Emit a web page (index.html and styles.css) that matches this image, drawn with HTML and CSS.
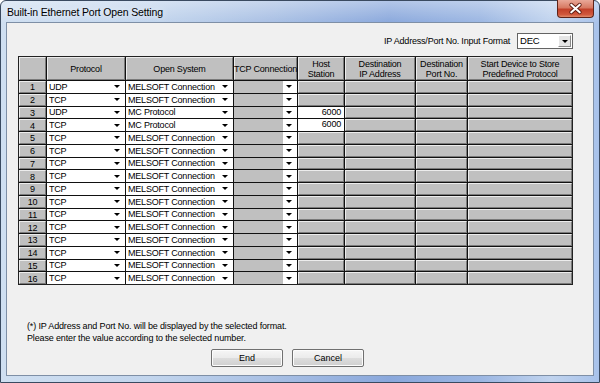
FILE: index.html
```html
<!DOCTYPE html>
<html lang="en">
<head>
    <meta charset="UTF-8">
    <meta name="viewport" content="width=device-width, initial-scale=1.0">
    <title>Built-in Ethernet Port Open Setting</title>
    <link rel="stylesheet" href="styles.css">
</head>
<body>
    <div class="window">
        <div class="titlebar">
            <span class="title">Built-in Ethernet Port Open Setting</span>
            <button class="close" aria-label="Close">
                <svg width="37" height="17" viewBox="0 0 37 17">
                    <path d="M14 4.5 L23 12.5 M23 4.5 L14 12.5" stroke="#5a1a10" stroke-width="4" stroke-linecap="round"/>
                    <path d="M14 4.5 L23 12.5 M23 4.5 L14 12.5" stroke="#fff" stroke-width="2.2" stroke-linecap="round"/>
                </svg>
            </button>
        </div>

        <div class="client">
            <div class="format-row">
                <span>IP Address/Port No. Input Format</span>
                <div class="combo">
                    <span class="combo-text">DEC</span>
                    <span class="combo-btn"></span>
                </div>
            </div>

            <div class="grid">
                <div class="head"></div>
                <div class="head">Protocol</div>
                <div class="head">Open System</div>
                <div class="head">TCP Connection</div>
                <div class="head">Host<br>Station</div>
                <div class="head">Destination<br>IP Address</div>
                <div class="head">Destination<br>Port No.</div>
                <div class="head">Start Device to Store<br>Predefined Protocol</div>

                <div class="num">1</div>
                <div class="sel"><span>UDP</span></div>
                <div class="sel"><span>MELSOFT Connection</span></div>
                <div class="sel off"><span></span></div>
                <div class="ro"></div><div class="ro"></div><div class="ro"></div><div class="ro"></div>

                <div class="num">2</div>
                <div class="sel"><span>TCP</span></div>
                <div class="sel"><span>MELSOFT Connection</span></div>
                <div class="sel off"><span></span></div>
                <div class="ro"></div><div class="ro"></div><div class="ro"></div><div class="ro"></div>

                <div class="num">3</div>
                <div class="sel"><span>UDP</span></div>
                <div class="sel"><span>MC Protocol</span></div>
                <div class="sel off"><span></span></div>
                <div class="val">6000</div><div class="ro"></div><div class="ro"></div><div class="ro"></div>

                <div class="num">4</div>
                <div class="sel"><span>TCP</span></div>
                <div class="sel"><span>MC Protocol</span></div>
                <div class="sel off"><span></span></div>
                <div class="val">6000</div><div class="ro"></div><div class="ro"></div><div class="ro"></div>

                <div class="num">5</div>
                <div class="sel"><span>TCP</span></div>
                <div class="sel"><span>MELSOFT Connection</span></div>
                <div class="sel off"><span></span></div>
                <div class="ro"></div><div class="ro"></div><div class="ro"></div><div class="ro"></div>

                <div class="num">6</div>
                <div class="sel"><span>TCP</span></div>
                <div class="sel"><span>MELSOFT Connection</span></div>
                <div class="sel off"><span></span></div>
                <div class="ro"></div><div class="ro"></div><div class="ro"></div><div class="ro"></div>

                <div class="num">7</div>
                <div class="sel"><span>TCP</span></div>
                <div class="sel"><span>MELSOFT Connection</span></div>
                <div class="sel off"><span></span></div>
                <div class="ro"></div><div class="ro"></div><div class="ro"></div><div class="ro"></div>

                <div class="num">8</div>
                <div class="sel"><span>TCP</span></div>
                <div class="sel"><span>MELSOFT Connection</span></div>
                <div class="sel off"><span></span></div>
                <div class="ro"></div><div class="ro"></div><div class="ro"></div><div class="ro"></div>

                <div class="num">9</div>
                <div class="sel"><span>TCP</span></div>
                <div class="sel"><span>MELSOFT Connection</span></div>
                <div class="sel off"><span></span></div>
                <div class="ro"></div><div class="ro"></div><div class="ro"></div><div class="ro"></div>

                <div class="num">10</div>
                <div class="sel"><span>TCP</span></div>
                <div class="sel"><span>MELSOFT Connection</span></div>
                <div class="sel off"><span></span></div>
                <div class="ro"></div><div class="ro"></div><div class="ro"></div><div class="ro"></div>

                <div class="num">11</div>
                <div class="sel"><span>TCP</span></div>
                <div class="sel"><span>MELSOFT Connection</span></div>
                <div class="sel off"><span></span></div>
                <div class="ro"></div><div class="ro"></div><div class="ro"></div><div class="ro"></div>

                <div class="num">12</div>
                <div class="sel"><span>TCP</span></div>
                <div class="sel"><span>MELSOFT Connection</span></div>
                <div class="sel off"><span></span></div>
                <div class="ro"></div><div class="ro"></div><div class="ro"></div><div class="ro"></div>

                <div class="num">13</div>
                <div class="sel"><span>TCP</span></div>
                <div class="sel"><span>MELSOFT Connection</span></div>
                <div class="sel off"><span></span></div>
                <div class="ro"></div><div class="ro"></div><div class="ro"></div><div class="ro"></div>

                <div class="num">14</div>
                <div class="sel"><span>TCP</span></div>
                <div class="sel"><span>MELSOFT Connection</span></div>
                <div class="sel off"><span></span></div>
                <div class="ro"></div><div class="ro"></div><div class="ro"></div><div class="ro"></div>

                <div class="num">15</div>
                <div class="sel"><span>TCP</span></div>
                <div class="sel"><span>MELSOFT Connection</span></div>
                <div class="sel off"><span></span></div>
                <div class="ro"></div><div class="ro"></div><div class="ro"></div><div class="ro"></div>

                <div class="num">16</div>
                <div class="sel"><span>TCP</span></div>
                <div class="sel"><span>MELSOFT Connection</span></div>
                <div class="sel off"><span></span></div>
                <div class="ro"></div><div class="ro"></div><div class="ro"></div><div class="ro"></div>
            </div>

            <p class="note">
                (*) IP Address and Port No. will be displayed by the selected format.<br>
                Please enter the value according to the selected number.
            </p>

            <div class="buttons">
                <button class="btn">End</button>
                <button class="btn">Cancel</button>
            </div>
        </div>
    </div>
</body>
</html>
```

FILE: styles.css
```css
* {
    box-sizing: border-box;
}

body {
    margin: 0;
    width: 600px;
    height: 383px;
    overflow: hidden;
    font-family: 'Liberation Sans', Arial, sans-serif;
    font-size: 9px;
    letter-spacing: -0.2px;
    color: #000;
}

/* window frame */
.window {
    width: 600px;
    height: 383px;
    display: flex;
    flex-direction: column;
    border: 1px solid #3a4a60;
    border-radius: 6px 6px 0 0;
    background:
        linear-gradient(to bottom, rgba(255,255,255,0.35), rgba(255,255,255,0) 22px),
        linear-gradient(to right, #cfdff1 0%, #c2d5ed 25%, #a9c0e4 45%, #8aa8dc 65%, #9bb6e2 80%, #c0d3ee 92%, #a8c2ea 100%);
}

.titlebar {
    height: 21px;
    display: flex;
    align-items: flex-start;
    padding-left: 6px;
}

.title {
    font-size: 10.5px;
    letter-spacing: -0.15px;
    line-height: 22px;
    color: #000;
    text-shadow: 0 0 6px rgba(255,255,255,0.9);
}

.close {
    margin-left: auto;
    margin-right: 5px;
    margin-top: -1px;
    width: 37px;
    height: 18px;
    padding: 0;
    border: 1px solid #5e2318;
    border-top: none;
    border-radius: 0 0 4px 4px;
    background: linear-gradient(to bottom, #e9a898 0%, #d77a63 45%, #c2412a 55%, #d0573c 85%, #e08a6a 100%);
    display: flex;
}

/* client area */
.client {
    flex: 1;
    margin: 0 5px 6px 5px;
    border: 1px solid #7e8fa6;
    background-color: #f0f0f0;
    padding: 0 20px 0 11px;
}

.format-row {
    margin-top: 10px;
    height: 16px;
    display: flex;
    justify-content: flex-end;
    align-items: center;
    gap: 7px;
}

.combo {
    width: 56px;
    height: 16px;
    display: flex;
    border: 1px solid #646464;
    background-color: #fff;
}

.combo-text {
    flex: 1;
    padding-left: 2px;
    line-height: 14px;
    font-size: 9.5px;
}

.combo-btn {
    width: 13px;
    margin: 1px;
    background-color: #e6e6e6;
    border: 1px solid;
    border-color: #fff #8a8a8a #8a8a8a #fff;
    display: flex;
    align-items: center;
    justify-content: center;
}

.combo-btn::after {
    content: '';
    border-left: 3px solid transparent;
    border-right: 3px solid transparent;
    border-top: 3px solid #000;
}

/* setting grid */
.grid {
    margin-top: 7px;
    display: grid;
    grid-template-columns: 27px 78px 107px 63px 46px 70px 51px 104px;
    grid-template-rows: 23px repeat(16, 11.75px);
    gap: 1px;
    background-color: #111;
    border: 1px solid #222;
    line-height: 10px;
}

.head,
.num,
.ro {
    background-color: #c0c0c0;
    border: 1px solid;
    border-color: #ececec #7a7a7a #7a7a7a #ececec;
}

.head {
    display: flex;
    align-items: center;
    justify-content: center;
    text-align: center;
    white-space: nowrap;
}

.num {
    display: flex;
    align-items: center;
    justify-content: center;
    padding-top: 1px;
}

.sel {
    background-color: #fff;
    display: flex;
    align-items: center;
    padding-left: 2px;
}

.sel span {
    flex: 1;
    white-space: nowrap;
    overflow: hidden;
}

.sel::after {
    content: '';
    margin: 0 5px 0 4px;
    border-left: 3px solid transparent;
    border-right: 3px solid transparent;
    border-top: 3px solid #000;
}

.sel.off {
    padding-left: 0;
    background: linear-gradient(to right, #c0c0c0 calc(100% - 14px), #fff 0);
}

.val {
    background-color: #fff;
    text-align: right;
    padding-right: 3px;
}

/* footer */
.note {
    margin: 35px 0 0 9px;
    line-height: 12px;
    letter-spacing: -0.15px;
}

.buttons {
    display: flex;
    gap: 9px;
    margin: 5px 0 0 193px;
}

.btn {
    width: 72px;
    height: 18px;
    padding: 0;
    font-family: inherit;
    font-size: 9px;
    color: #000;
    border: 1px solid #707070;
    border-radius: 2px;
    background: linear-gradient(to bottom, #f6f6f6 0%, #ebebeb 50%, #dddddd 51%, #cfcfcf 100%);
    box-shadow: inset 0 0 0 1px #fcfcfc;
}
```
